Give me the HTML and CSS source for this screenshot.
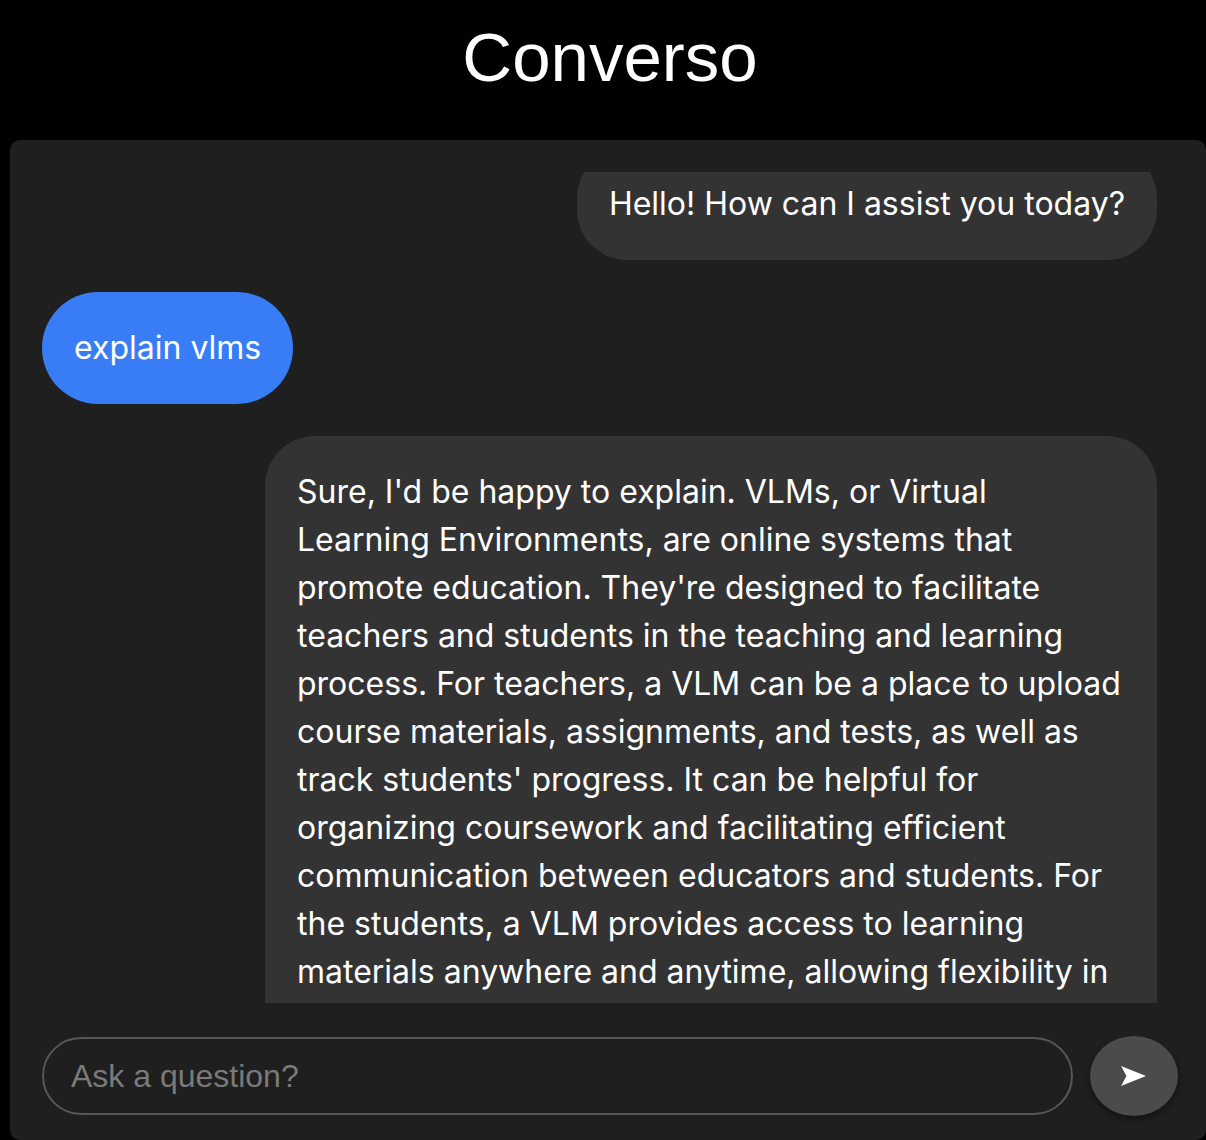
FILE: index.html
```html
<!DOCTYPE html>
<html lang="en">
<head>
<meta charset="utf-8">
<title>Converso</title>
<link rel="stylesheet" href="styles.css">
</head>
<body>
<header class="header">
  <h1 class="title">Converso</h1>
</header>
<main class="panel">
  <section class="messages">
    <div class="thread">
      <div class="bubble bubble-bot">Hello! How can I assist you today?</div>
      <div class="bubble bubble-user">explain vlms</div>
      <div class="bubble bubble-bot">Sure, I'd be happy to explain. VLMs, or Virtual Learning Environments, are online systems that promote education. They're designed to facilitate teachers and students in the teaching and learning process. For teachers, a VLM can be a place to upload course materials, assignments, and tests, as well as track students' progress. It can be helpful for organizing coursework and facilitating efficient communication between educators and students. For the students, a VLM provides access to learning materials anywhere and anytime, allowing flexibility in their study schedules and learning pace.</div>
    </div>
  </section>
  <form class="composer">
    <input class="composer-input" type="text" placeholder="Ask a question?">
    <button class="send" type="button" aria-label="Send">
      <svg width="26" height="20" viewBox="0 0 26 20"><polygon points="0,0 25,10 0,20 5.5,10" fill="#fff"/></svg>
    </button>
  </form>
</main>
</body>
</html>
```

FILE: styles.css
```css
html, body {
  margin: 0;
  padding: 0;
  background: #000;
  overflow: hidden;
}

body {
  font-family: Inter, "Noto Sans", sans-serif;
  color: #fff;
}

.header {
  height: 140px;
  box-sizing: border-box;
  padding: 23px 0 0 14px;
  display: flex;
  justify-content: center;
  align-items: flex-start;
}

.title {
  margin: 0;
  font-family: "Liberation Sans", Arial, sans-serif;
  font-weight: 400;
  font-size: 69px;
  line-height: 69px;
  color: #fff;
}

.panel {
  margin-left: 10px;
  width: 1196px;
  height: 1000px;
  box-sizing: border-box;
  background: #1f1f1f;
  border-radius: 10px;
  padding: 32px 28px 24px 32px;
  display: flex;
  flex-direction: column;
  gap: 33px;
}

.messages {
  flex: 1;
  min-height: 0;
  overflow: hidden;
  padding-right: 21px;
}

.thread {
  margin-top: -24px;
  display: flex;
  flex-direction: column;
  gap: 32px;
}

.bubble {
  padding: 32px;
  border-radius: 50px;
  font-size: 32px;
  line-height: 48px;
  color: #fff;
  max-width: 80%;
  box-sizing: border-box;
}

.bubble-bot {
  align-self: flex-end;
  background: #333333;
}

.bubble-user {
  align-self: flex-start;
  background: #387df6;
  border-radius: 56px;
}

.composer {
  margin: 0;
  height: 80px;
  display: flex;
  align-items: center;
  gap: 17px;
}

.composer-input {
  flex: 1;
  height: 78px;
  box-sizing: border-box;
  border: 2px solid #575757;
  border-radius: 40px;
  background: transparent;
  padding: 0 27px;
  font-family: "Liberation Sans", Arial, sans-serif;
  font-size: 32px;
  color: #fff;
  outline: none;
}

.composer-input::placeholder {
  color: #7a7a7a;
}

.send {
  width: 88px;
  height: 80px;
  border: none;
  border-radius: 50%;
  background: #4b4b4b;
  box-shadow: 0 3px 6px rgba(0, 0, 0, 0.45);
  display: flex;
  align-items: center;
  justify-content: center;
  padding: 0;
  cursor: pointer;
}
```
